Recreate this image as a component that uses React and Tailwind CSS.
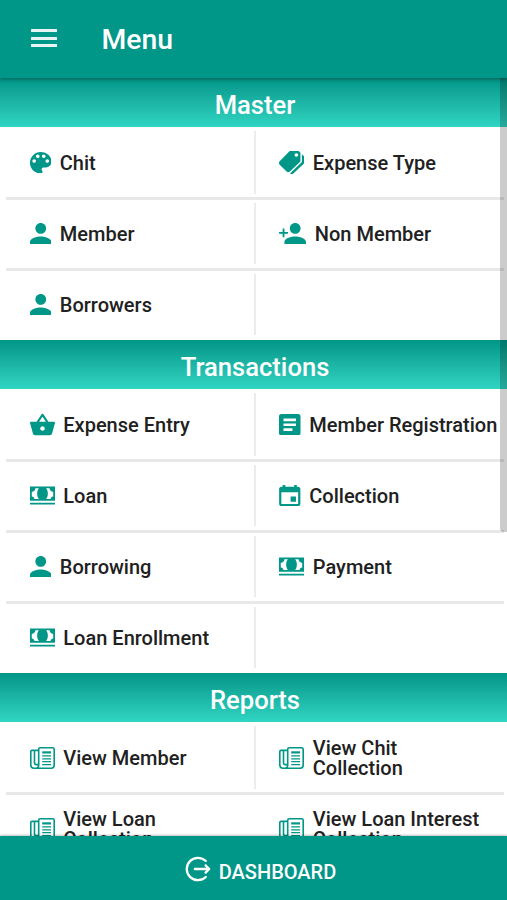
import React from 'react';
import {
  IoMdBasket,
  IoMdCalendar,
  IoMdCash,
  IoMdColorPalette,
  IoMdListBox,
  IoMdPerson,
  IoMdPersonAdd,
  IoMdPricetags,
} from 'react-icons/io';

// Newspaper outline used by every report entry
const NewsIcon = ({ className = '' }) => (
  <svg
    viewBox="0 0 25 22"
    fill="none"
    stroke="currentColor"
    strokeWidth="1.6"
    className={className}
  >
    <path d="M8.7 3.5V2.2C8.7 1.3 9.3.8 10.2.8H22.7c.9 0 1.5.6 1.5 1.5V18c0 1.9-1.2 3.2-3 3.2H4C2 21.2.8 20 .8 18V4.6C.8 3.8 1.2 3.4 2 3.4h6.7V18c0 2-1 3.2-2.6 3.2" />
    <path d="M4.5 3.5V16c0 1 .7 1.6 1.6 1.6h2.4" />
    <path d="M12.2 8.9h8.8M12.2 11.8h8.8M12.2 14.7h8.8M12.2 17.6h8.8" strokeWidth="1.2" />
    <path d="M12.2 5.4h8.8" strokeWidth="2.2" />
  </svg>
);

const LogoutIcon = () => (
  <svg
    viewBox="0 0 26 26"
    fill="none"
    stroke="currentColor"
    strokeWidth="2.3"
    strokeLinecap="round"
    strokeLinejoin="round"
    className="mt-[2px] h-[26px] w-[26px]"
  >
    <path d="M20.8 5A11.2 11.2 0 1 0 20.8 21" />
    <path d="M9.8 13H24M20.6 9.4 24.2 13l-3.6 3.6" />
  </svg>
);

// Each glyph keeps its own width, so the label starts right after it
const icons = {
  palette: <IoMdColorPalette viewBox="64 64 384 384" className="h-[21.5px] w-[21.5px]" />,
  tags: <IoMdPricetags viewBox="32 32 448 448" className="h-[25px] w-[25px]" />,
  person: <IoMdPerson viewBox="64 64 384 384" className="h-[21.5px] w-[21.5px]" />,
  personAdd: <IoMdPersonAdd viewBox="16 64 480 384" className="h-[21.5px] w-[27px]" />,
  basket: <IoMdBasket viewBox="32 32 448 448" className="h-[25px] w-[25px]" />,
  listBox: <IoMdListBox viewBox="64 64 384 384" className="h-[21.5px] w-[21.5px]" />,
  cash: <IoMdCash viewBox="32 32 448 448" className="h-[25px] w-[25px]" />,
  calendar: <IoMdCalendar viewBox="64 48 384 416" className="h-[23px] w-[21.5px]" />,
  news: <NewsIcon className="h-[22px] w-[25px]" />,
};

const sections = [
  {
    title: 'Master',
    items: [
      { icon: 'palette', label: 'Chit' },
      { icon: 'tags', label: 'Expense Type' },
      { icon: 'person', label: 'Member' },
      { icon: 'personAdd', label: 'Non Member' },
      { icon: 'person', label: 'Borrowers' },
      null,
    ],
  },
  {
    title: 'Transactions',
    items: [
      { icon: 'basket', label: 'Expense Entry' },
      { icon: 'listBox', label: 'Member Registration' },
      { icon: 'cash', label: 'Loan' },
      { icon: 'calendar', label: 'Collection' },
      { icon: 'person', label: 'Borrowing' },
      { icon: 'cash', label: 'Payment' },
      { icon: 'cash', label: 'Loan Enrollment' },
      null,
    ],
  },
  {
    title: 'Reports',
    items: [
      { icon: 'news', label: 'View Member' },
      { icon: 'news', label: 'View Chit\nCollection' },
      { icon: 'news', label: 'View Loan\nCollection' },
      { icon: 'news', label: 'View Loan Interest\nCollection', noDivider: true },
    ],
  },
];

const MenuItem = ({ item }) => {
  if (!item) return <div />;

  return (
    <div className="flex items-center gap-[8.5px] pl-[23.8px]">
      <span className="shrink-0 text-[#009688]">{icons[item.icon]}</span>
      <span className="text-[20px] leading-5 font-medium whitespace-pre text-[#212121]">{item.label}</span>
    </div>
  );
};

const Section = ({ title, items }) => (
  <section>
    <h2 className="flex h-[49px] items-center justify-center bg-linear-to-b from-[#009688] to-[#30d5c3] pt-[5px] text-[25.6px] font-medium text-white">
      <span className="pl-[3px]">{title}</span>
    </h2>
    <div className="pr-[3px] pl-1.5">
      {Array.from({ length: Math.ceil(items.length / 2) }, (_, row) => (
        <div
          key={row}
          className={`grid grid-cols-[247.5px_1fr] ${
            row === 0 ? 'h-[71px] py-1' : '-mt-px h-[72px] border-t-[3px] border-[#e8e8e8] pt-[3px] pb-[5px]'
          }`}
        >
          <MenuItem item={items[row * 2]} />
          <div
            className={`grid border-l-2 ${
              items[row * 2 + 1]?.noDivider ? 'border-transparent' : 'border-[#ececec]'
            }`}
          >
            <MenuItem item={items[row * 2 + 1]} />
          </div>
        </div>
      ))}
    </div>
  </section>
);

export default function App() {
  return (
    <div className="flex h-[900px] w-[507px] flex-col overflow-hidden bg-white font-['Roboto',sans-serif]">
      <header className="z-10 flex h-[78px] shrink-0 items-center bg-[#009688] pl-[31px] text-white shadow-[0_1px_4px_rgba(0,0,0,0.4)]">
        <div className="flex w-[26px] flex-col gap-[4.5px] pb-0.5">
          <span className="h-[3px] bg-white/90" />
          <span className="h-[3px] bg-white/90" />
          <span className="h-[3px] bg-white/90" />
        </div>
        <h1 className="pt-0.5 pl-[44.5px] text-[28.4px] font-medium">Menu</h1>
      </header>

      <main className="relative min-h-0 flex-1 overflow-hidden">
        {sections.map((section) => (
          <Section key={section.title} title={section.title} items={section.items} />
        ))}
        {/* Scroll indicator */}
        <div className="absolute top-0 right-0 h-[454px] w-[7px] rounded-bl-sm bg-black/20" />
      </main>

      <footer className="z-10 flex h-16 shrink-0 items-center justify-center gap-2 bg-[#009688] pl-3.5 text-white shadow-[0_-1px_2px_rgba(0,0,0,0.25)]">
        <LogoutIcon />
        <span className="pt-2 text-[20px] font-medium">DASHBOARD</span>
      </footer>
    </div>
  );
}
